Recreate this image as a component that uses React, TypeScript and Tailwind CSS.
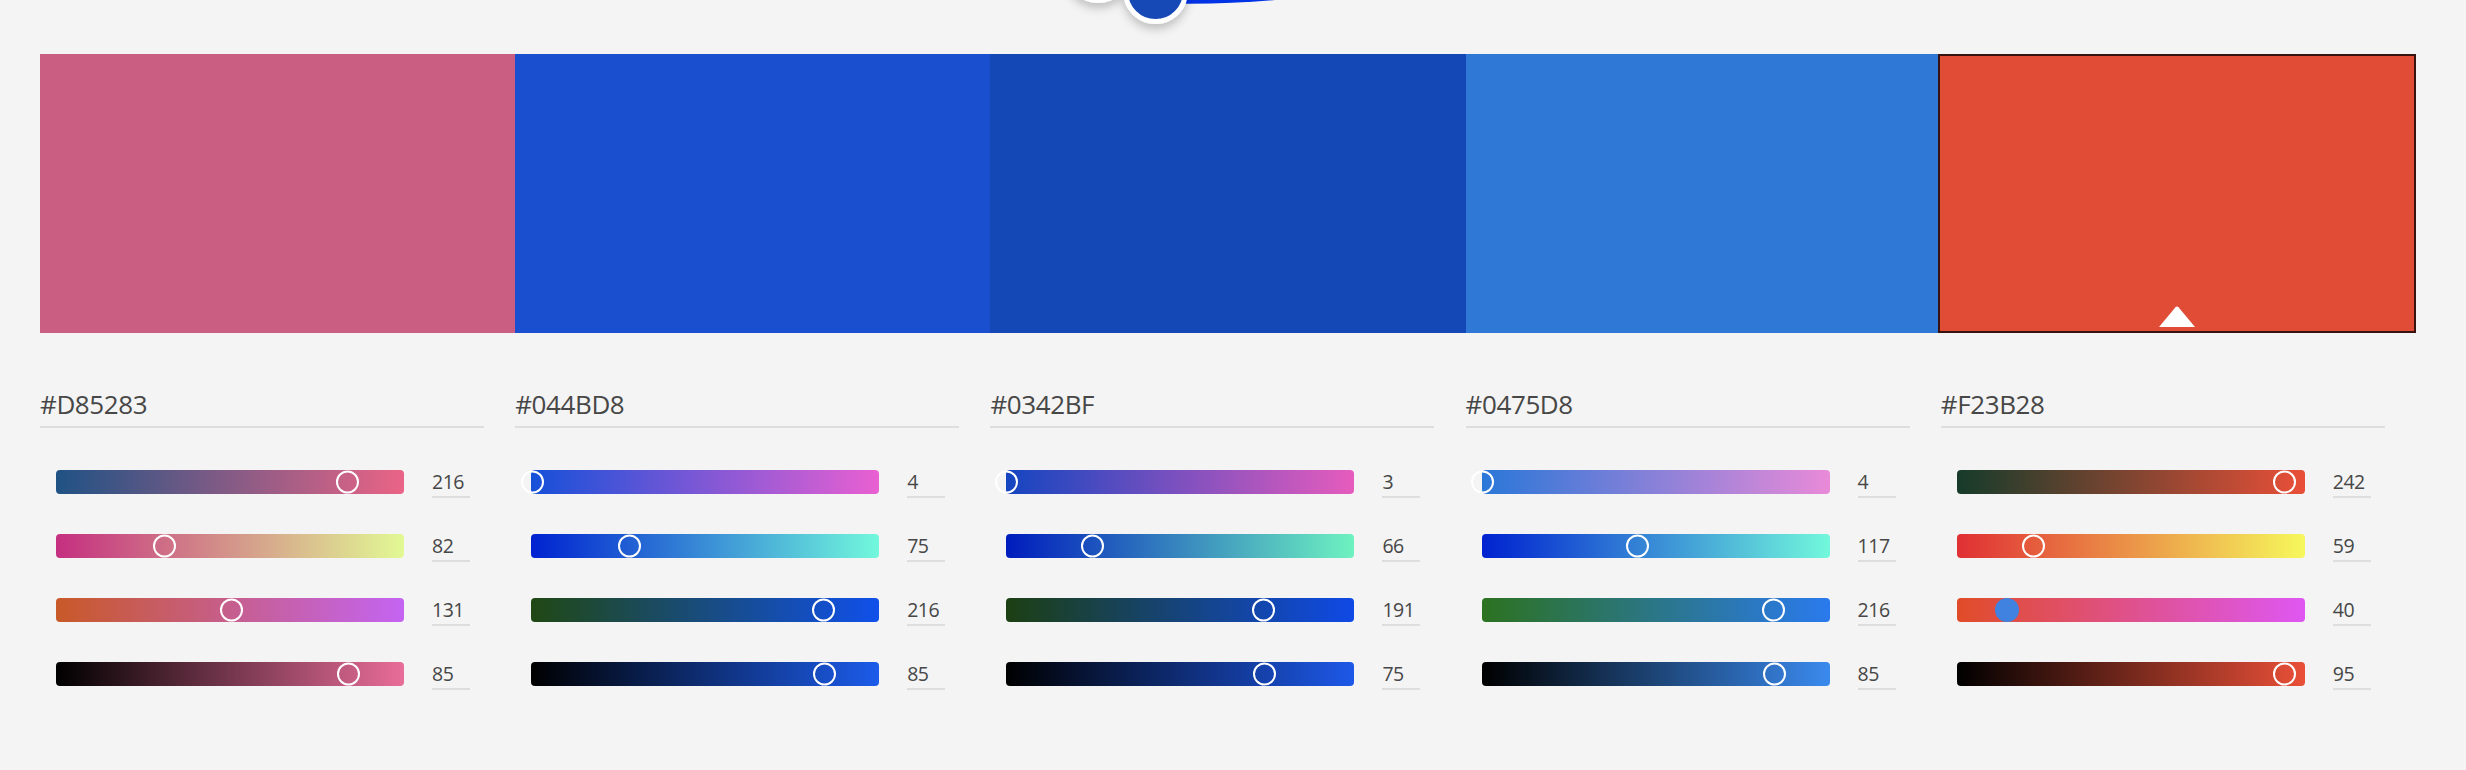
import React from "react";

type Row = { v: number; max: number; grad: string; active?: boolean };
type Col = { hex: string; swatch: string; selected?: boolean; rows: Row[] };

const columns: Col[] = [
  {
    hex: "#D85283",
    swatch: "bg-[#c95d82]",
    rows: [
      { v: 216, max: 255, grad: "bg-[linear-gradient(to_right,#1f5284,#ea6486)]" },
      { v: 82, max: 255, grad: "bg-[linear-gradient(to_right,#c52f80,#e2f994)]" },
      { v: 131, max: 255, grad: "bg-[linear-gradient(to_right,#c85928,#c464f2)]" },
      { v: 85, max: 100, grad: "bg-[linear-gradient(to_right,#000000,#e96d99)]" },
    ],
  },
  {
    hex: "#044BD8",
    swatch: "bg-[#1a50d0]",
    rows: [
      { v: 4, max: 255, grad: "bg-[linear-gradient(to_right,#1650d8,#e960d2)]" },
      { v: 75, max: 255, grad: "bg-[linear-gradient(to_right,#0022d0,#72f8dc)]" },
      { v: 216, max: 255, grad: "bg-[linear-gradient(to_right,#204814,#1050ea)]" },
      { v: 85, max: 100, grad: "bg-[linear-gradient(to_right,#000000,#1c5cea)]" },
    ],
  },
  {
    hex: "#0342BF",
    swatch: "bg-[#1448b6]",
    rows: [
      { v: 3, max: 255, grad: "bg-[linear-gradient(to_right,#1445c0,#e65cbd)]" },
      { v: 66, max: 255, grad: "bg-[linear-gradient(to_right,#001cbd,#6ef2c0)]" },
      { v: 191, max: 255, grad: "bg-[linear-gradient(to_right,#1c3f12,#0f49e6)]" },
      { v: 75, max: 100, grad: "bg-[linear-gradient(to_right,#000000,#1d58e8)]" },
    ],
  },
  {
    hex: "#0475D8",
    swatch: "bg-[#2f78d5]",
    rows: [
      { v: 4, max: 255, grad: "bg-[linear-gradient(to_right,#2a77d8,#e98ad8)]" },
      { v: 117, max: 255, grad: "bg-[linear-gradient(to_right,#0022d0,#72f8dc)]" },
      { v: 216, max: 255, grad: "bg-[linear-gradient(to_right,#2c7220,#2a7aee)]" },
      { v: 85, max: 100, grad: "bg-[linear-gradient(to_right,#000000,#3a8aee)]" },
    ],
  },
  {
    hex: "#F23B28",
    swatch: "bg-[#e04c36]",
    selected: true,
    rows: [
      { v: 242, max: 255, grad: "bg-[linear-gradient(to_right,#163b2a,#ea4f38)]" },
      { v: 59, max: 255, grad: "bg-[linear-gradient(to_right,#e03034,#f6f85c)]" },
      { v: 40, max: 255, grad: "bg-[linear-gradient(to_right,#e04c28,#de57f2)]", active: true },
      { v: 95, max: 100, grad: "bg-[linear-gradient(to_right,#000000,#ea5038)]" },
    ],
  },
];

const font = "font-['Open_Sans','Liberation_Sans',sans-serif]";

function Slider({ row }: { row: Row }) {
  const center = (row.v / row.max) * 349.5 - 4.2;
  const size = row.active ? 24 : 23;
  return (
    <div className="flex items-start gap-[28px] pl-[16px]">
      <div className={`relative h-[24px] w-[348px] rounded-[4px] ${row.grad}`}>
        {row.active ? (
          <div
            className="absolute top-1/2 h-[24px] w-[24px] -translate-y-1/2 rounded-full bg-[#3f82e0]"
            style={{ left: center - size / 2 }}
          />
        ) : (
          <div
            className="absolute top-1/2 h-[23px] w-[23px] -translate-y-1/2 rounded-full border-2 border-white"
            style={{ left: center - size / 2 }}
          />
        )}
      </div>
      <div className="w-[38px] border-b-2 border-[#dedede] pb-[2px] text-[19.5px] leading-[24px] tracking-[-0.5px] text-[#474747]">
        {row.v}
      </div>
    </div>
  );
}

export default function App() {
  return (
    <div className={`h-[770px] w-full overflow-hidden bg-[#f4f4f4] ${font}`}>
      <svg width={2466} height={54} viewBox="0 0 2466 54" className="block">
        <defs>
          <filter id="sh" x="-50%" y="-50%" width="200%" height="200%">
            <feDropShadow dx="0" dy="5" stdDeviation="5" floodColor="#000" floodOpacity="0.22" />
          </filter>
        </defs>
        <path d="M1175 0 L1175 3.6 Q1230 4.2 1275 0 Z" fill="#0033e6" />
        <circle cx={1098} cy={-31} r={34} fill="#ffffff" filter="url(#sh)" />
        <circle cx={1155.5} cy={-8.5} r={30} fill="#1448b6" stroke="#ffffff" strokeWidth={5} filter="url(#sh)" />
      </svg>
      <div className="pl-[40px] pr-[50px]">
        <div className="grid h-[279px] grid-cols-5">
          {columns.map((c) =>
            c.selected ? (
              <div
                key={c.hex}
                className={`-ml-[3px] flex flex-col items-center justify-end border-2 border-[#38120e] pb-[4px] ${c.swatch}`}
              >
                <svg width={36} height={21} viewBox="0 0 36 21">
                  <path d="M0 21 L16.5 1.2 Q18 -0.4 19.5 1.2 L36 21 Z" fill="#ffffff" />
                </svg>
              </div>
            ) : (
              <div key={c.hex} className={c.swatch} />
            )
          )}
        </div>
        <div className="mt-[55px] grid grid-cols-5">
          {columns.map((c) => (
            <div key={c.hex} className="flex flex-col">
              <div className="w-[444px] border-b-2 border-[#dedede] pb-[6px] text-[26px] leading-[32px] tracking-[-0.4px] text-[#474747]">
                {c.hex}
              </div>
              <div className="mt-[42px] flex flex-col gap-[36px]">
                {c.rows.map((r, i) => (
                  <Slider key={i} row={r} />
                ))}
              </div>
            </div>
          ))}
        </div>
      </div>
    </div>
  );
}
